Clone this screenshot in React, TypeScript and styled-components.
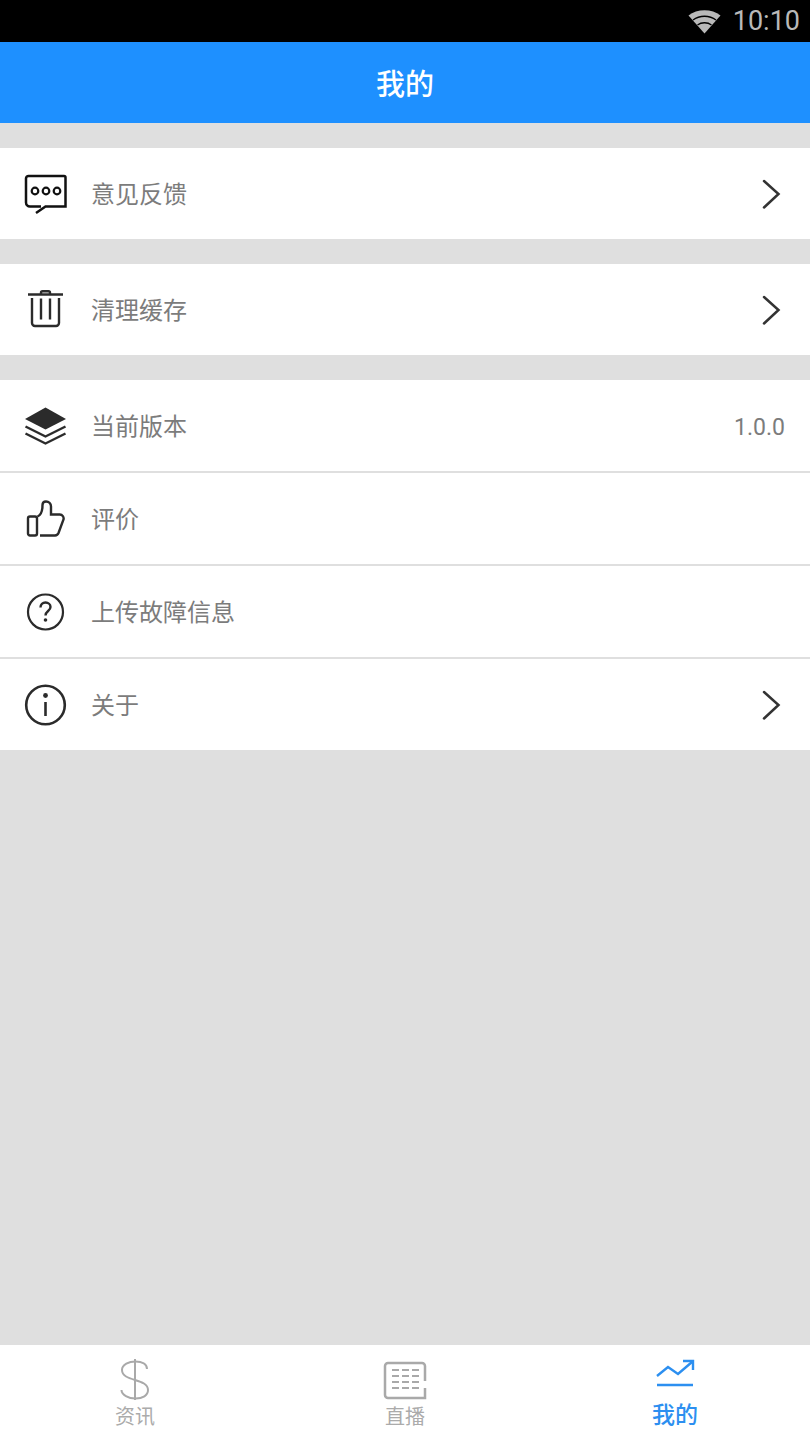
import React from "react";
import styled, { createGlobalStyle } from "styled-components";

const CJK = `"Noto Sans CJK SC", "Noto Sans", sans-serif`;

const Global = createGlobalStyle`
  html, body { margin: 0; padding: 0; background: #dfdfdf; }
  * { box-sizing: border-box; }
`;

const Page = styled.div`
  width: 810px;
  height: 1440px;
  display: flex;
  flex-direction: column;
  background: #dfdfdf;
  font-family: ${CJK};
  overflow: hidden;
`;

const StatusBar = styled.div`
  height: 42px;
  background: #000;
  display: flex;
  align-items: center;
  justify-content: flex-end;
  padding-right: 10px;
  gap: 12px;
`;

const Clock = styled.span`
  font-family: Roboto, sans-serif;
  font-size: 27px;
  line-height: 42px;
  color: #b9b9b9;
`;

const Header = styled.header`
  height: 81px;
  padding-bottom: 2px;
  background: #1e90ff;
  display: flex;
  align-items: center;
  justify-content: center;
  color: #fff;
  font-size: 29px;
  font-weight: 500;
`;

const Content = styled.main`
  flex: 1;
  display: flex;
  flex-direction: column;
`;

const Group = styled.section`
  margin-top: 25px;
  background: #fff;
  display: flex;
  flex-direction: column;
`;

const Row = styled.div<{ $divided?: boolean }>`
  height: ${(p) => (p.$divided ? 93 : 91)}px;
  display: flex;
  align-items: center;
  padding: 0 25px 0 23px;
  border-bottom: ${(p) => (p.$divided ? "2px solid #dfdfdf" : "none")};
`;

const IconSlot = styled.span`
  width: 44px;
  height: 44px;
  flex: none;
  display: flex;
`;

const Label = styled.span`
  margin-left: 24px;
  flex: 1;
  font-size: 24px;
  color: #7c7c7c;
  line-height: 32px;
  padding-bottom: 2px;
`;

const Version = styled.span`
  font-family: Roboto, sans-serif;
  font-size: 23px;
  line-height: 32px;
  padding-top: 5px;
  color: #7c7c7c;
`;

const Chevron = styled.svg`
  width: 20px;
  height: 32px;
  margin-right: 3px;
  flex: none;
`;

const TabBar = styled.nav`
  height: 95px;
  background: #fff;
  display: grid;
  grid-template-columns: repeat(3, 1fr);
`;

const Tab = styled.div`
  display: flex;
  flex-direction: column;
  align-items: center;
`;

const TabIcon = styled.svg`
  width: 48px;
  height: 48px;
  margin-top: 11px;
  flex: none;
`;

const TabLabel = styled.span<{ $active?: boolean }>`
  font-size: ${(p) => (p.$active ? 23 : 20)}px;
  font-weight: ${(p) => (p.$active ? 500 : 400)};
  color: ${(p) => (p.$active ? "#2c8ff0" : "#ababab")};
  line-height: 28px;
  margin-top: ${(p) => (p.$active ? -5 : -2)}px;
`;

const Svg = ({ children }: { children: React.ReactNode }) => (
  <svg width="44" height="44" viewBox="0 0 44 44" fill="none" stroke="#2b2b2b" strokeWidth="2.4">
    {children}
  </svg>
);

const ChatIcon = () => (
  <Svg>
    <path d="M18 34.500H7a4 4 0 0 1-4-4V6.500a2.500 2.500 0 0 1 2.500-2.500H41a1.500 1.500 0 0 1 1.500 1.500v29H22.500L13 41" stroke="#111" strokeWidth="2.500" />
    <circle cx="12" cy="19" r="3.300" stroke="#111" strokeWidth="2.200" />
    <circle cx="23" cy="19" r="3.300" stroke="#111" strokeWidth="2.200" />
    <circle cx="34" cy="19" r="3.300" stroke="#111" strokeWidth="2.200" />
  </Svg>
);

const TrashIcon = () => (
  <Svg>
    <path d="M5 6.500h35" />
    <path d="M18 6.500V4.800a1.500 1.500 0 0 1 1.500-1.500h6a1.500 1.500 0 0 1 1.500 1.500v1.700" />
    <path d="M9 10v25a3 3 0 0 0 3 3h21a3 3 0 0 0 3-3V10" />
    <path d="M18 10.500v21M27 10.500v21" />
  </Svg>
);

const LayersIcon = () => (
  <Svg>
    <path d="M22.500 3.500 43 15 22.500 25.500 2 15Z" fill="#2b2b2b" stroke="none" />
    <path d="M2.500 22.500 22.500 32.500 42.500 22.500M2.500 29.500 22.500 39.500 42.500 29.500" strokeWidth="2.400" />
  </Svg>
);

const ThumbIcon = () => (
  <Svg>
    <rect x="5" y="19.500" width="9" height="19" rx="2" />
    <path d="M17 38.500h15a4 4 0 0 0 3.500-2.500l5-13.500a4 4 0 0 0-3.700-5H28V9.500a5 5 0 0 0-5-5c-2 0-3.500 1.500-3.500 3.500 0 7-2.500 10.500-5 11.500" />
  </Svg>
);

const QuestionIcon = () => (
  <Svg>
    <circle cx="22.500" cy="22" r="17.500" strokeWidth="2.200" />
    <path d="M17.500 17.500c0-3 2.200-5 5-5s5 2 5 4.500c0 4-5 4-5 8.500" strokeWidth="2.400" />
    <circle cx="22.500" cy="30" r="1.800" fill="#2b2b2b" stroke="none" />
  </Svg>
);

const InfoIcon = () => (
  <Svg>
    <circle cx="22.500" cy="22" r="19.300" strokeWidth="2.600" />
    <circle cx="22.500" cy="12.500" r="2.400" fill="#2b2b2b" stroke="none" />
    <path d="M22.500 19v14" strokeWidth="2.600" />
  </Svg>
);

const Arrow = () => (
  <Chevron viewBox="0 0 20 32" fill="none" stroke="#333" strokeWidth="2.500" strokeLinecap="round">
    <path d="M2 3 16.500 16 2 29.500" />
  </Chevron>
);

export default function App() {
  return (
    <Page>
      <Global />
      <StatusBar>
        <svg width="33" height="25" viewBox="0 0 33 25" fill="none" stroke="#000" strokeWidth="1.300">
          <path d="M0.500 6.500C9 -0.500 24 -0.500 32.500 6.500L16.500 24.500Z" fill="#b9b9b9" stroke="none" />
          <path d="M5 11c6.500-5 16.500-5 23 0" />
          <path d="M9.500 16c4-3 10-3 14 0" />
        </svg>
        <Clock>10:10</Clock>
      </StatusBar>
      <Header>我的</Header>
      <Content>
        <Group>
          <Row>
            <IconSlot><ChatIcon /></IconSlot>
            <Label>意见反馈</Label>
            <Arrow />
          </Row>
        </Group>
        <Group>
          <Row>
            <IconSlot><TrashIcon /></IconSlot>
            <Label>清理缓存</Label>
            <Arrow />
          </Row>
        </Group>
        <Group>
          <Row $divided>
            <IconSlot><LayersIcon /></IconSlot>
            <Label>当前版本</Label>
            <Version>1.0.0</Version>
          </Row>
          <Row $divided>
            <IconSlot><ThumbIcon /></IconSlot>
            <Label>评价</Label>
          </Row>
          <Row $divided>
            <IconSlot><QuestionIcon /></IconSlot>
            <Label>上传故障信息</Label>
          </Row>
          <Row>
            <IconSlot><InfoIcon /></IconSlot>
            <Label>关于</Label>
            <Arrow />
          </Row>
        </Group>
      </Content>
      <TabBar>
        <Tab>
          <TabIcon viewBox="0 0 48 48" fill="none" stroke="#a9a9a9" strokeWidth="2">
            <path d="M36 13c0-5-5-7.500-11.500-7.500S11 8.500 11 14c0 12 26 8 26 20 0 5.500-5.500 8.500-12.500 8.500S10.500 39 10.500 34" />
            <path d="M24 3v41" />
          </TabIcon>
          <TabLabel>资讯</TabLabel>
        </Tab>
        <Tab>
          <TabIcon viewBox="0 0 48 48" fill="none" stroke="#a9a9a9" strokeWidth="2.500">
            <path d="M44 25V10a3 3 0 0 0-3-3H7a3 3 0 0 0-3 3v29a3 3 0 0 0 3 3h37v-10" />
            <path d="M11 14h7M21 14h7M31 14h7M11 20h7M21 20h7M31 20h7M11 26h7M21 26h7M31 26h7M11 32h7M21 32h7M31 32h7" strokeWidth="2" />
          </TabIcon>
          <TabLabel>直播</TabLabel>
        </Tab>
        <Tab>
          <TabIcon viewBox="0 0 48 48" fill="none" stroke="#2c8ff0" strokeWidth="2.400">
            <path d="M6 20 17 11l10 7L41 6" />
            <path d="M32 5h10v9" />
            <path d="M6 29h36" />
          </TabIcon>
          <TabLabel $active>我的</TabLabel>
        </Tab>
      </TabBar>
    </Page>
  );
}
